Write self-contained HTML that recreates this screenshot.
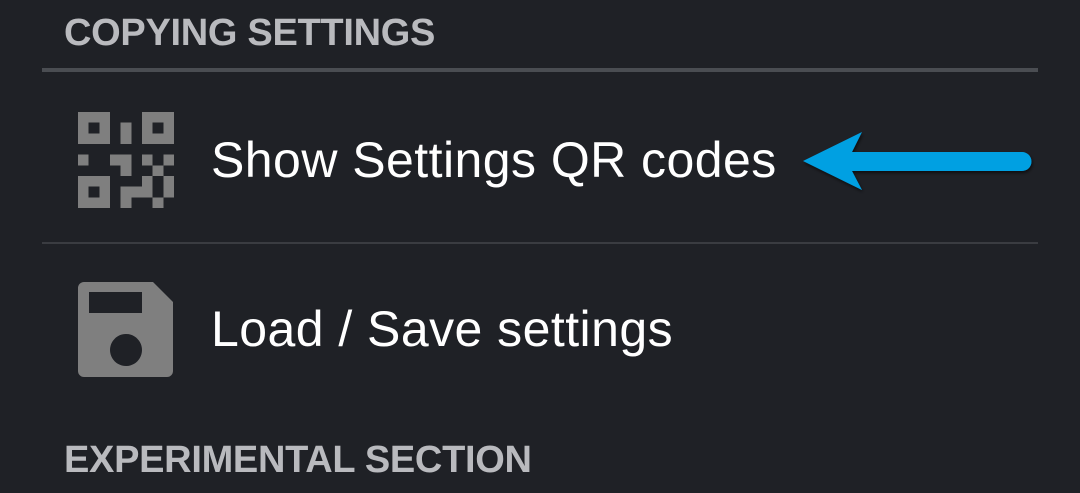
<!DOCTYPE html>
<html><head><meta charset="utf-8"><style>
html,body{margin:0;padding:0;width:1080px;height:493px;background:#1f2126;overflow:hidden;font-family:"Liberation Sans",sans-serif;}
.t{position:absolute;white-space:nowrap;}
.h{color:#b9babe;font-weight:bold;font-size:38px;left:64px;letter-spacing:-0.3px;}
.i{color:#ffffff;font-size:50px;left:211px;letter-spacing:0.45px;}
</style></head><body>
<div class="t h" style="top:12px">COPYING SETTINGS</div>
<div style="position:absolute;left:42px;top:68px;width:996px;height:4px;background:#4a4d52"></div>
<svg style="position:absolute;left:78px;top:112px" width="96" height="96" viewBox="0 0 9 9" shape-rendering="crispEdges" fill="#7f7f7f">
<path fill-rule="evenodd" d="M0 0h3v3h-3zM1 1v1h1v-1zM6 0h3v3h-3zM7 1v1h1v-1zM0 6h3v3h-3zM1 7v1h1v-1z"/>
<rect x="4" y="1" width="1" height="2"/>
<rect x="0" y="4" width="1" height="1"/>
<rect x="3" y="4" width="2" height="1"/>
<rect x="4" y="5" width="1" height="1"/>
<rect x="6" y="4" width="1" height="1"/>
<rect x="8" y="4" width="1" height="1"/>
<rect x="7" y="5" width="1" height="1"/>
<rect x="6" y="6" width="1" height="1"/>
<rect x="8" y="6" width="1" height="2"/>
<rect x="4" y="7" width="3" height="1"/>
<rect x="4" y="8" width="1" height="1"/>
<rect x="7" y="8" width="1" height="1"/>
</svg>
<div class="t i" style="top:131px">Show Settings QR codes</div>
<svg style="position:absolute;left:0;top:0" width="1080" height="493">
<defs><filter id="s" x="-10%" y="-50%" width="120%" height="200%"><feDropShadow dx="1" dy="2" stdDeviation="1.5" flood-color="#000" flood-opacity="0.6"/></filter></defs>
<g filter="url(#s)" fill="#00a0e2">
<path d="M803 161 L862 132 L852 152 L1022 152 A9.5 9.5 0 0 1 1022 171 L852 171 L862 190 Z"/>
</g>
</svg>
<div style="position:absolute;left:42px;top:242px;width:996px;height:2px;background:#3a3c41"></div>
<svg style="position:absolute;left:78px;top:282px" width="96" height="96" viewBox="0 0 96 96">
<path fill="#7f7f7f" fill-rule="evenodd" d="M6 0H75L95 20V89a6 6 0 0 1-6 6H6a6 6 0 0 1-6-6V6a6 6 0 0 1 6-6zM11 10V31H64V10zM48 52a16 16 0 1 0 0.01 0z"/>
</svg>
<div class="t i" style="top:300px">Load / Save settings</div>
<div class="t h" style="top:439px">EXPERIMENTAL SECTION</div>
</body></html>
